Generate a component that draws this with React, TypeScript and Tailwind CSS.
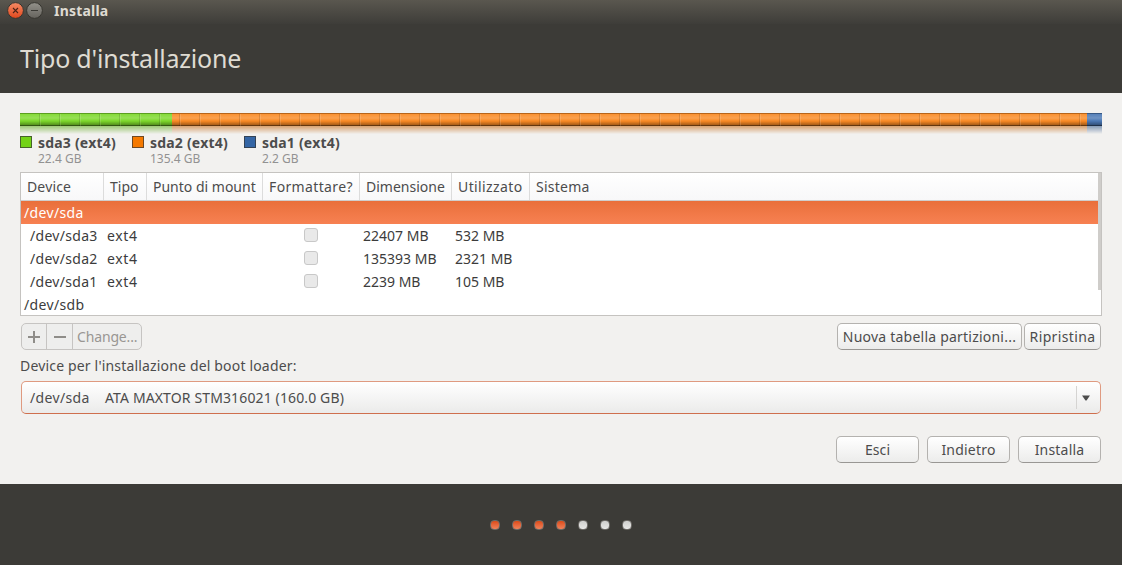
import type { ReactNode } from "react";
import { clsx } from "clsx";

const disks = [
  { name: "sda3 (ext4)", size: "22.4 GB", color: "bg-[#73d216]" },
  { name: "sda2 (ext4)", size: "135.4 GB", color: "bg-[#f57900]" },
  { name: "sda1 (ext4)", size: "2.2 GB", color: "bg-[#3465a4]" },
];

const columns = [
  { label: "Device", width: "w-[83px] tracking-[0.15px]" },
  { label: "Tipo", width: "w-[43px]" },
  { label: "Punto di mount", width: "w-[116px]" },
  { label: "Formattare?", width: "w-[97px] tracking-[0.36px]" },
  { label: "Dimensione", width: "w-[92px]" },
  { label: "Utilizzato", width: "w-[78px] tracking-[0.4px]" },
  { label: "Sistema", width: "flex-1 tracking-[0.25px]" },
];

const partitions = [
  { device: "/dev/sda3", type: "ext4", size: "22407 MB", used: "532 MB" },
  { device: "/dev/sda2", type: "ext4", size: "135393 MB", used: "2321 MB" },
  { device: "/dev/sda1", type: "ext4", size: "2239 MB", used: "105 MB" },
];

const steps = [true, true, true, true, false, false, false];

function TitleBar() {
  return (
    <div className="flex h-6 items-start bg-linear-to-b from-[#5a574f] to-[#3e3d39] pt-[2px] pl-[7px]">
      <svg width="37" height="18" viewBox="0 0 37 18" fill="none">
        <defs>
          <linearGradient id="close" x1="0" y1="0" x2="0" y2="1">
            <stop offset="0" stopColor="#f68b66" />
            <stop offset="1" stopColor="#e0471c" />
          </linearGradient>
          <linearGradient id="min" x1="0" y1="0" x2="0" y2="1">
            <stop offset="0" stopColor="#93918a" />
            <stop offset="1" stopColor="#65635d" />
          </linearGradient>
        </defs>
        <circle cx="8.5" cy="8.5" r="7.9" fill="url(#close)" stroke="#36352f" />
        <path d="M6 6l5 5M11 6l-5 5" stroke="#4d2418" strokeWidth="1.1" />
        <circle cx="27.5" cy="8.5" r="7.9" fill="url(#min)" stroke="#36352f" />
        <path d="M24 8.5h7" stroke="#3a3934" />
      </svg>
      <span className="ml-[10px] text-[14px] leading-[18px] font-bold tracking-[0.2px] text-[#dfdbd2]">
        Installa
      </span>
    </div>
  );
}

function BarSegments({ className }: { className: string }) {
  return (
    <div className={clsx("flex", className)}>
      <div className="w-[152px] bg-[#7dd82b]" />
      <div className="flex-1 bg-[#f98a24]" />
      <div className="w-[15px] bg-[#4b78b4]" />
    </div>
  );
}

function DiskBar() {
  return (
    <div className="relative h-[21px]">
      <div className="relative h-[13px]">
        <BarSegments className="h-full" />
        <div className="absolute inset-0 bg-[linear-gradient(to_bottom,#0004_0,#0004_1px,#fff1_1px,#fff3_5px,#0000_8px,#0005_12px,#0009_12px,#0009_13px)]" />
      </div>
      <BarSegments className="h-2 mask-[linear-gradient(to_bottom,#0009,#0000)] brightness-80" />
      {/* notches every 20px, skipped over the last partition */}
      <div className="absolute top-px right-[15px] bottom-2 left-0 bg-[repeating-linear-gradient(to_right,#0000_0,#0000_19px,#0002_19px,#0002_20px)]" />
      <div className="absolute top-px right-[15px] bottom-2 left-px bg-[repeating-linear-gradient(to_right,#0000_0,#0000_19px,#fff2_19px,#fff2_20px)]" />
    </div>
  );
}

function Legend() {
  return (
    <div className="mt-px flex">
      {disks.map((disk) => (
        <div key={disk.name} className="flex w-28 gap-[6px]">
          <div className={clsx("mt-px size-3 border border-[#333333b3]", disk.color)} />
          <div className="whitespace-nowrap">
            <div className="-mt-px text-[14px] leading-[17px] font-bold tracking-[0.2px] text-[#4c4c4c]">
              {disk.name}
            </div>
            <div className="mt-px text-[12px] leading-[14px] text-[#929292]">{disk.size}</div>
          </div>
        </div>
      ))}
    </div>
  );
}

function PartitionTable() {
  return (
    <div className="relative mt-[6px] h-36 overflow-hidden border border-[#c5c3c0] bg-white whitespace-nowrap">
      <div className="mr-[3px] flex h-7 border-b border-[#d0cecc] bg-linear-to-b from-white to-[#f8f8f9]">
        {columns.map((col) => (
          <div
            key={col.label}
            className={clsx(
              "border-r border-[#dcdcdc] pl-[6px] leading-[27px] last:border-r-0",
              col.width
            )}
          >
            {col.label}
          </div>
        ))}
      </div>
      <div className="leading-[23px] text-[#3c3c3c]">
        <div className="mr-[3px] h-[23px] bg-linear-to-b from-[#e96f3a] to-[#f78152] pl-[3px] tracking-[0.35px] text-white">
          /dev/sda
        </div>
        {partitions.map((row) => (
          <div key={row.device} className="flex h-[23px]">
            <div className="w-[86px] pl-[9px] tracking-[0.3px]">{row.device}</div>
            <div className="w-[197px] tracking-[0.6px]">{row.type}</div>
            <div className="w-[59px] pt-[4px]">
              <div className="size-[14px] rounded-[3px] border border-[#c8c8c8] bg-[#e9e9e9]" />
            </div>
            <div className="w-[92px]">{row.size}</div>
            <div>{row.used}</div>
          </div>
        ))}
        <div className="pl-[3px] tracking-[0.35px]">/dev/sdb</div>
      </div>
      <div className="absolute top-0 right-0 h-[117px] w-[3px] bg-[#cfcdca]" />
    </div>
  );
}

function Button({ className, children }: { className: string; children: ReactNode }) {
  return (
    <button
      className={clsx(
        "h-[27px] rounded-[5px] border border-[#b4b2af] border-b-[#999794] bg-linear-to-b from-white to-[#ececeb] text-center leading-[25px] whitespace-nowrap",
        className
      )}
    >
      {children}
    </button>
  );
}

function Toolbar() {
  return (
    <div className="mt-[7px] flex justify-between px-px">
      <div className="flex h-[27px] rounded-[5px] border border-[#c6c4c2] bg-[#eeeeed] leading-[25px] text-[#999693]">
        <div className="flex w-[25px] items-center justify-center border-r border-[#c6c4c2]">
          <svg width="12" height="12" viewBox="0 0 12 12" fill="#8f8d89">
            <path d="M5 0h2v5h5v2H7v5H5V7H0V5h5z" />
          </svg>
        </div>
        <div className="flex w-[26px] items-center justify-center border-r border-[#c6c4c2]">
          <svg width="12" height="12" viewBox="0 0 12 12" fill="#8f8d89">
            <path d="M0 5h12v2H0z" />
          </svg>
        </div>
        <div className="w-[68px] pl-[4px] tracking-[-0.15px]">Change...</div>
      </div>
      <div className="flex gap-[2px]">
        <Button className="w-[185px] tracking-[0.22px]">Nuova tabella partizioni...</Button>
        <Button className="w-[77px] tracking-[0.36px]">Ripristina</Button>
      </div>
    </div>
  );
}

function BootLoaderSelect() {
  return (
    <div className="mx-px mt-[5px] flex h-[33px] items-center rounded-[5px] border border-[#df9a80] border-b-[#cf6f4d] bg-linear-to-b from-white to-[#ebebea] pl-2 whitespace-nowrap">
      <span className="w-[75px] tracking-[0.35px]">/dev/sda</span>
      <span className="flex-1 tracking-[0.13px]">ATA MAXTOR STM316021 (160.0 GB)</span>
      <div className="flex h-[23px] w-6 items-center border-l border-[#d5d4d2] pl-[5px]">
        <svg width="8" height="6" viewBox="0 0 8 6" fill="#4c4c4c">
          <path d="M0 0.5h8L4.5 5.5h-1z" />
        </svg>
      </div>
    </div>
  );
}

export default function App() {
  return (
    <div className="flex h-[565px] w-[1122px] flex-col overflow-hidden bg-[#f2f1ef] font-['Noto_Sans',sans-serif] text-[14px] text-[#4c4c4c]">
      <header className="h-[93px] bg-[#3c3b37]">
        <TitleBar />
        <h1 className="pt-[17px] pl-5 text-[25px] leading-[34px] tracking-[-0.2px] text-[#dfdbd2]">
          Tipo d'installazione
        </h1>
      </header>
      <main className="flex flex-1 flex-col px-5 pt-5">
        <DiskBar />
        <Legend />
        <PartitionTable />
        <Toolbar />
        <div className="mt-[6px] leading-5 tracking-[0.17px]">
          Device per l'installazione del boot loader:
        </div>
        <BootLoaderSelect />
        <div className="mt-[22px] mr-px flex justify-end gap-2">
          <Button className="w-[83px] tracking-[0.1px]">Esci</Button>
          <Button className="w-[83px] tracking-[0.2px]">Indietro</Button>
          <Button className="w-[83px] tracking-[0.2px]">Installa</Button>
        </div>
      </main>
      <footer className="flex h-[81px] items-center justify-center gap-3 bg-[#3c3b37]">
        {steps.map((done, i) => (
          <div
            key={i}
            className={clsx(
              "size-[10px] rounded-[4px] border border-[#6d6a66]",
              done
                ? "bg-linear-to-b from-[#dc4a14] to-[#f08158]"
                : "bg-linear-to-b from-[#cfcfcd] to-[#e8e8e6]"
            )}
          />
        ))}
      </footer>
    </div>
  );
}
